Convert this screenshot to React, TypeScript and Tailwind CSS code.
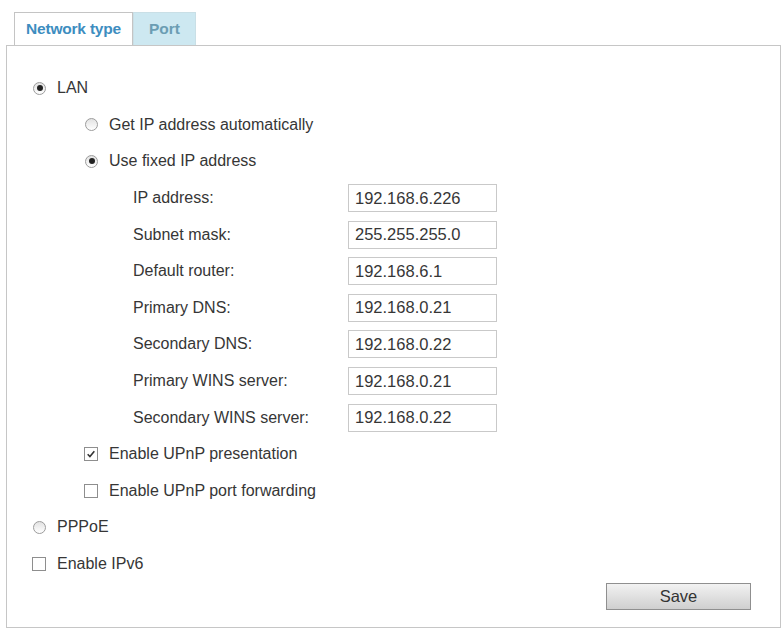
import React, { useState } from 'react';

type Field = { label: string; value: string };

const FIELDS: Field[] = [
  { label: 'IP address:', value: '192.168.6.226' },
  { label: 'Subnet mask:', value: '255.255.255.0' },
  { label: 'Default router:', value: '192.168.6.1' },
  { label: 'Primary DNS:', value: '192.168.0.21' },
  { label: 'Secondary DNS:', value: '192.168.0.22' },
  { label: 'Primary WINS server:', value: '192.168.0.21' },
  { label: 'Secondary WINS server:', value: '192.168.0.22' },
];

const Radio: React.FC<{ checked: boolean; onClick: () => void }> = ({ checked, onClick }) => (
  <span
    onClick={onClick}
    className="w-[13px] h-[13px] rounded-full border border-[#9c9c9c] bg-gradient-to-b from-[#e2e2e2] to-white flex items-center justify-center shrink-0 cursor-pointer"
  >
    {checked && <span className="w-[6px] h-[6px] rounded-full bg-[#222]" />}
  </span>
);

const Check: React.FC<{ checked: boolean; onClick: () => void }> = ({ checked, onClick }) => (
  <span
    onClick={onClick}
    className="w-[14px] h-[14px] border border-[#8e8e8e] bg-white flex items-center justify-center shrink-0 cursor-pointer"
  >
    {checked && (
      <svg viewBox="0 0 12 12" className="w-[10px] h-[10px]">
        <path d="M2 6.3 L4.7 9 L10 2.6" fill="none" stroke="#333" strokeWidth="1.9" />
      </svg>
    )}
  </span>
);

const App: React.FC = () => {
  const [mode, setMode] = useState<'lan' | 'pppoe'>('lan');
  const [ipMode, setIpMode] = useState<'auto' | 'fixed'>('fixed');
  const [upnpPresent, setUpnpPresent] = useState(true);
  const [upnpForward, setUpnpForward] = useState(false);
  const [ipv6, setIpv6] = useState(false);
  const [values, setValues] = useState<string[]>(FIELDS.map((f) => f.value));

  return (
    <div
      className="w-[784px] h-[631px] bg-white text-[#363636] text-[16px] overflow-hidden"
      style={{ fontFamily: '"Liberation Sans", Arial, sans-serif' }}
    >
      {/* tabs */}
      <div className="flex pl-[14px] pt-[12px] h-[45px]">
        <div className="w-[119px] h-[33px] border border-b-0 border-[#c4c4c4] bg-white flex items-center justify-center text-[15.5px] font-bold text-[#3d8dbf] tracking-[-0.2px]">
          Network type
        </div>
        <div className="w-[63px] h-[33px] border border-b-0 border-[#c9dfe6] bg-[#cde8f1] flex items-center justify-center text-[15.5px] font-bold text-[#6b9db3]">
          Port
        </div>
      </div>

      {/* panel */}
      <div className="ml-[6px] w-[775px] h-[583px] border border-[#c6c6c6] pt-[24px]">
        <div className="flex items-center h-[36.6px] pl-[26px] gap-[11px]">
          <Radio checked={mode === 'lan'} onClick={() => setMode('lan')} />
          <span>LAN</span>
        </div>

        <div className="flex items-center h-[36.6px] pl-[78px] gap-[11px]">
          <Radio checked={ipMode === 'auto'} onClick={() => setIpMode('auto')} />
          <span>Get IP address automatically</span>
        </div>
        <div className="flex items-center h-[36.6px] pl-[78px] gap-[11px]">
          <Radio checked={ipMode === 'fixed'} onClick={() => setIpMode('fixed')} />
          <span>Use fixed IP address</span>
        </div>

        {FIELDS.map((f, i) => (
          <div key={f.label} className="flex items-center h-[36.6px] pl-[126px]">
            <span className="w-[215px]">{f.label}</span>
            <input
              value={values[i]}
              onChange={(e) => setValues((prev) => prev.map((v, j) => (j === i ? e.target.value : v)))}
              className="w-[149px] h-[28px] border border-[#c9c9c9] pl-[6px] text-[16.5px] text-[#363636] outline-none"
            />
          </div>
        ))}

        <div className="flex items-center h-[36.6px] pl-[77px] gap-[11px]">
          <Check checked={upnpPresent} onClick={() => setUpnpPresent(!upnpPresent)} />
          <span>Enable UPnP presentation</span>
        </div>
        <div className="flex items-center h-[36.6px] pl-[77px] gap-[11px]">
          <Check checked={upnpForward} onClick={() => setUpnpForward(!upnpForward)} />
          <span>Enable UPnP port forwarding</span>
        </div>

        <div className="flex items-center h-[36.6px] pl-[26px] gap-[11px]">
          <Radio checked={mode === 'pppoe'} onClick={() => setMode('pppoe')} />
          <span>PPPoE</span>
        </div>
        <div className="flex items-center h-[36.6px] pl-[25px] gap-[11px]">
          <Check checked={ipv6} onClick={() => setIpv6(!ipv6)} />
          <span>Enable IPv6</span>
        </div>

        <div className="flex justify-end pr-[29px] pt-[1px]">
          <button className="w-[145px] h-[27px] border border-[#8f8f8f] bg-gradient-to-b from-[#f2f2f2] to-[#cfcfcf] text-[16.5px] text-[#333]">
            Save
          </button>
        </div>
      </div>
    </div>
  );
};

export default App;
